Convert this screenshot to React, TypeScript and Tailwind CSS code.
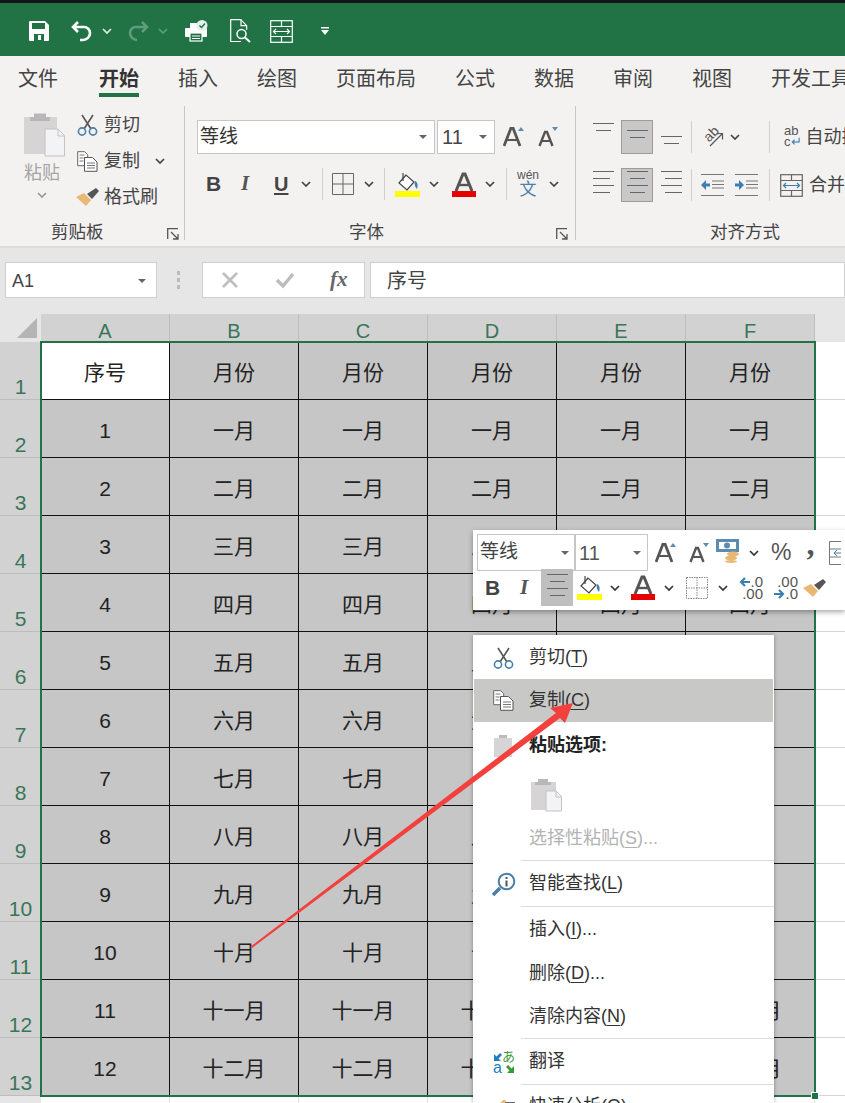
import React from "react";

const F = "font-['Liberation_Sans','Noto_Sans_CJK_SC',sans-serif]";

type S = { className?: string };
const Chev = ({ className = "ml-0" , c = "#444" }: S & { c?: string }) => (
  <svg viewBox="0 0 10 6" className={`w-[10px] h-[6px] shrink-0 ${className}`}><path d="M1 1l4 4 4-4" fill="none" stroke={c} strokeWidth="1.7" /></svg>
);
const Tri = ({ className = "" }: S) => (
  <svg viewBox="0 0 8 4" className={`w-[8px] h-[4px] shrink-0 ${className}`}><path d="M0 0h8L4 4z" fill="#666" /></svg>
);
const Launcher = ({ className = "" }: S) => (
  <svg viewBox="0 0 12 12" className={`w-[12px] h-[12px] shrink-0 ${className}`}><path d="M.7 11V.7H11M4 4l7 7M11 6v5H6" fill="none" stroke="#555" strokeWidth="1.3" /></svg>
);
const Scissors = ({ className = "" }: S) => (
  <svg viewBox="0 0 21 22" className={`w-[21px] h-[22px] shrink-0 ${className}`}>
    <path d="M5 1l9 14M16 1L7 15" stroke="#555" strokeWidth="1.6" fill="none" />
    <circle cx="5" cy="17.5" r="3.6" fill="none" stroke="#4a7fa8" strokeWidth="1.6" />
    <circle cx="16" cy="17.5" r="3.6" fill="none" stroke="#4a7fa8" strokeWidth="1.6" />
  </svg>
);
const CopyIc = ({ className = "" }: S) => (
  <svg viewBox="0 0 21 21" className={`w-[21px] h-[21px] shrink-0 ${className}`}>
    <path d="M.7.7h7l3 3v3H7.5v8H.7z" fill="#fff" stroke="#666" />
    <path d="M7.5 6.5h8l4.5 4.5v9.300H7.500z" fill="#fff" stroke="#555" />
    <path d="M2.500 4h5M2.500 7h4M2.500 10h4M10 12h8M10 14.500h8M10 17h8" stroke="#777" />
  </svg>
);
const Brush = ({ className = "" }: S) => (
  <svg viewBox="0 0 24 20" className={`w-[24px] h-[20px] shrink-0 ${className}`}>
    <path d="M0 10l8-4 7 7-5 6z" fill="#e8b874" />
    <path d="M11 7l9-6 3 3-7 8z" fill="#555" />
  </svg>
);
const PasteBig = ({ className = "" }: S) => (
  <svg viewBox="0 0 41 45" className={`w-[41px] h-[45px] shrink-0 ${className}`}>
    <rect x="0" y="5" width="33" height="37" fill="#d6d4d4" />
    <path d="M10 5V1.500h12V5h4v4H6V5z" fill="#b9b7b7" />
    <path d="M21 17h13l6.500 6.500V44H21z" fill="#f3f2f4" stroke="#c4c2c2" />
    <path d="M34 17v7h6.500" fill="none" stroke="#c4c2c2" />
  </svg>
);
const FillIc = ({ className = "" }: S) => (
  <svg viewBox="0 0 25 25" className={`w-[25px] h-[25px] shrink-0 ${className}`}>
    <path d="M11 3l-7 8 8 7 7-8z" fill="#fff" stroke="#444" strokeWidth="1.200" />
    <path d="M8 1v8" stroke="#444" strokeWidth="1.200" />
    <path d="M20 9c3 1 3 5 2 8-2-2-3-5-2-8z" fill="#3e7fb5" />
    <rect x="0" y="19" width="25" height="6" fill="#ffff00" />
  </svg>
);
const FontColor = ({ className = "" }: S) => (
  <svg viewBox="0 0 24 25" className={`w-[24px] h-[25px] shrink-0 ${className}`}>
    <path d="M4 19L11 2h2l7 17" fill="none" stroke="#555" strokeWidth="3" />
    <path d="M7 13h10" stroke="#555" strokeWidth="2.400" />
    <rect x="0" y="19" width="24" height="6" fill="#e60000" />
  </svg>
);
const GrowA = ({ className = "", up = true, small = false }: S & { up?: boolean; small?: boolean }) => (
  <svg viewBox="0 0 22 20" className={`w-[22px] h-[20px] shrink-0 ${className}`}>
    <path d={small ? "M2.500 19L8 5h2l5.500 14" : "M1 19L8 1h2l7 18"} fill="none" stroke="#555" strokeWidth={small ? 2.400 : 2.800} />
    <path d={small ? "M5 14h8" : "M4 13h10"} stroke="#555" strokeWidth="2" />
    <path d={up ? "M15 4l3-4 3 4z" : "M15 0h6l-3 4z"} fill="#5d8cb0" />
  </svg>
);
const Lines = ({ kind, rows = 4, className = "", w = 21 }: S & { kind: "l" | "c" | "r"; rows?: number; w?: number }) => {
  const ln = Array.from({ length: rows }, (_, i) => i);
  return (
    <svg viewBox={`0 0 ${w} ${rows * 7}`} className={`shrink-0 ${className}`} style={{ width: w, height: rows * 7 }}>
      {ln.map((i) => {
        const short = i % 2 === 1 ? (kind === "c" ? 3 : 4) : 0;
        const x1 = kind === "r" ? short : kind === "c" ? short : 0;
        const x2 = kind === "l" ? w - short : kind === "c" ? w - short : w;
        return <line key={i} x1={x1} x2={x2} y1={i * 7 + 0.5} y2={i * 7 + 0.5} stroke="#666" strokeWidth="1" />;
      })}
    </svg>
  );
};
const Indent = ({ right = false, className = "" }: S & { right?: boolean }) => (
  <svg viewBox="0 0 23 22" className={`w-[23px] h-[22px] shrink-0 ${className}`}>
    {[0.5, 7, 14, 21.5].map((y) => <line key={y} x1={y === 0.5 || y === 21.5 ? 0 : 11} x2="23" y1={y} y2={y} stroke="#777" />)}
    <line x1="11" x2="23" y1="10.500" y2="10.500" stroke="#777" />
    {right ? <path d="M0 9.500h4V6l5 5-5 5v-3.500H0z" fill="#3d7fb0" /> : <path d="M9 9.500H5V6l-5 5 5 5v-3.500h4z" fill="#3d7fb0" />}
  </svg>
);
const Merge = ({ className = "", stroke = "#666" }: S & { stroke?: string }) => (
  <svg viewBox="0 0 23 23" className={`w-[23px] h-[23px] shrink-0 ${className}`}>
    <rect x=".7" y=".7" width="21.600" height="21.600" fill="none" stroke={stroke} strokeWidth="1.200" />
    <path d="M.7 6.500h21.600M.7 16.500h21.600M11.500.7v5.800M11.500 16.500v5.800" stroke={stroke} strokeWidth="1.200" />
    <path d="M4 11.500h15M6 9l-2.500 2.500L6 14M17 9l2.500 2.500L17 14" fill="none" stroke={stroke === "#666" ? "#3d7fb0" : stroke} strokeWidth="1.200" />
  </svg>
);
const VSep = ({ className = "" }: S) => <div className={`w-px h-[32px] bg-[#d0cfce] shrink-0 ${className}`} />;
const ArrowL = () => <svg viewBox="0 0 11 10" className="w-[11px] h-[10px] shrink-0"><path d="M11 5H3M6 1L2 5l4 4" fill="none" stroke="#3d7fb0" strokeWidth="2.200" /></svg>;
const ArrowR = () => <svg viewBox="0 0 11 10" className="w-[11px] h-[10px] shrink-0"><path d="M0 5h8M5 1l4 4-4 4" fill="none" stroke="#3d7fb0" strokeWidth="2.200" /></svg>;

const tabs = ["文件", "开始", "插入", "绘图", "页面布局", "公式", "数据", "审阅", "视图", "开发工具"];
const months = ["一月", "二月", "三月", "四月", "五月", "六月", "七月", "八月", "九月", "十月", "十一月", "十二月"];

function Qat() {
  return (
    <div className="h-[53px] bg-[#217346] flex items-center pl-[29px] pt-[3px]">
      <svg viewBox="0 0 20 20" className="w-[20px] h-[20px] shrink-0"><path fillRule="evenodd" d="M1 0h15l4 4v15a1 1 0 0 1-1 1H1a1 1 0 0 1-1-1V1a1 1 0 0 1 1-1zM3 2v6h13V2zM5 13v7h10v-7z" fill="#fff" /><rect x="9" y="14" width="3" height="5" fill="#fff" /></svg>
      <svg viewBox="0 0 22 22" className="w-[22px] h-[22px] ml-[22px] shrink-0"><path d="M7 2L2 7l5 5M2 7h11a6 6 0 0 1 6 6 7 7 0 0 1-7 7H9" fill="none" stroke="#fff" strokeWidth="2.600" /></svg>
      <Chev c="#dfeee6" className="ml-[9px] w-[9px]" />
      <svg viewBox="0 0 22 22" className="w-[22px] h-[22px] ml-[15px] shrink-0"><path d="M15 2l5 5-5 5M20 7H9a6 6 0 0 0-6 6 7 7 0 0 0 7 7" fill="none" stroke="#5d9c7d" strokeWidth="2.600" /></svg>
      <Chev c="#5d9c7d" className="ml-[9px] w-[9px]" />
      <svg viewBox="0 0 23 22" className="w-[23px] h-[22px] ml-[17px] shrink-0">
        <rect x="0" y="8" width="22" height="9" rx="1" fill="#fff" />
        <rect x="5" y="3" width="9" height="6" fill="#fff" />
        <rect x="5" y="13" width="12" height="8" fill="#217346" stroke="#fff" strokeWidth="1.200" />
        <path d="M7 16h8M7 18.500h8" stroke="#fff" />
        <circle cx="17" cy="5.500" r="5.500" fill="#e5f0ea" />
        <path d="M14.500 5.500l2 2 3.500-4" fill="none" stroke="#217346" strokeWidth="1.400" />
      </svg>
      <svg viewBox="0 0 22 24" className="w-[22px] h-[24px] ml-[22px] shrink-0">
        <path d="M11 22.500H.7V.7h10l6 6v4" fill="none" stroke="#fff" strokeWidth="1.200" />
        <path d="M11 .7v6h6" fill="none" stroke="#fff" strokeWidth="1.200" />
        <circle cx="11.500" cy="15" r="4.500" fill="none" stroke="#fff" strokeWidth="1.500" />
        <path d="M15 18.500l5 4.500" stroke="#fff" strokeWidth="2" />
      </svg>
      <Merge stroke="#fff" className="ml-[18px]" />
      <svg viewBox="0 0 8 8" className="w-[8px] h-[8px] ml-[28px] shrink-0"><path d="M0 0h8v1.500H0zM0 3h8L4 8z" fill="#fff" /></svg>
    </div>
  );
}

function Tabs() {
  return (
    <div className="h-[49px] flex pl-[18px] gap-[39px] pt-[11px] text-[20px] leading-[24px] text-[#444] whitespace-nowrap overflow-hidden">
      {tabs.map((t) => (
        <div key={t} className={`shrink-0 ${t === "开始" ? "font-bold text-[#333] ml-[2px]" : ""}`}>
          {t}
          {t === "开始" && <div className="h-[4px] mt-[2px] bg-[#217346]" />}
        </div>
      ))}
    </div>
  );
}

function Clipboard() {
  return (
    <div className="w-[185px] shrink-0 border-r border-[#c8c6c4] mb-[6px] mt-[1px] flex flex-col">
      <div className="flex h-[112px] shrink-0 text-[18px] leading-[22px] text-[#444]">
        <div className="w-[77px] shrink-0 pl-[24px] pt-[6px] flex flex-col">
          <PasteBig />
          <div className="text-[18px] leading-[22px] text-[#a5a5a5] mt-[5px] whitespace-nowrap">粘贴</div>
          <Chev c="#999" className="ml-[13px] mt-[8px]" />
        </div>
        <div className="flex flex-col pt-[8px] gap-[14px]">
          <div className="flex items-center h-[22px]"><Scissors /><span className="ml-[6px]">剪切</span></div>
          <div className="flex items-center h-[22px]"><CopyIc /><span className="ml-[6px]">复制</span><Chev className="ml-[15px]" /></div>
          <div className="flex items-center h-[22px]"><Brush className="-ml-px" /><span className="ml-[4px]">格式刷</span></div>
        </div>
      </div>
      <div className="flex items-center h-[22px] shrink-0 mt-[3px] text-[17.5px] text-[#444]">
        <span className="ml-[51px]">剪贴板</span>
        <Launcher className="ml-[63px] mt-[4px]" />
      </div>
    </div>
  );
}

function FontGroup() {
  return (
    <div className="w-[391px] shrink-0 border-r border-[#c8c6c4] mb-[6px] mt-[1px] flex flex-col">
      <div className="h-[112px] shrink-0 pt-[14px] flex flex-col">
        <div className="flex items-center ml-[12px] h-[34px]">
          <div className="w-[238px] h-[34px] bg-white border border-[#c6c6c6] flex items-center justify-between pl-[2px] pr-[7px] text-[19px] text-[#333]">等线<Tri /></div>
          <div className="w-[58px] h-[34px] ml-[2px] bg-white border border-[#c6c6c6] flex items-center justify-between pl-[4px] pr-[7px] text-[20px] text-[#444]">11<Tri /></div>
          <GrowA className="ml-[8px]" />
          <GrowA className="ml-[12px]" up={false} small />
        </div>
        <div className="flex items-center ml-[21px] mt-[13px] h-[34px] text-[#444]">
          <span className="w-[14px] text-[21px] font-bold">B</span>
          <span className="ml-[21px] w-[14px] text-[21px] italic font-['Liberation_Serif',serif] font-bold text-[#555]">I</span>
          <span className="ml-[19px] w-[16px] text-[20px] font-bold underline underline-offset-2">U</span>
          <Chev className="ml-[11px]" />
          <VSep className="ml-[11px]" />
          <svg viewBox="0 0 22 22" className="w-[22px] h-[22px] ml-[9px] shrink-0"><path d="M.5.500h21v21H.5zM11 0v22M0 11h22" fill="none" stroke="#666" /></svg>
          <Chev className="ml-[10px]" />
          <VSep className="ml-[10px]" />
          <FillIc className="ml-[10px]" />
          <Chev className="ml-[9px]" />
          <FontColor className="ml-[13px]" />
          <Chev className="ml-[9px]" />
          <VSep className="ml-[11px]" />
          <div className="ml-[10px] w-[22px] flex flex-col items-center leading-none">
            <span className="text-[12px] leading-[11px] text-[#555]">wén</span>
            <span className="text-[17px] leading-[18px] text-[#4a80a8]">文</span>
          </div>
          <Chev className="ml-[10px]" />
        </div>
      </div>
      <div className="flex items-center h-[22px] shrink-0 mt-[3px] text-[17.5px] text-[#444]">
        <span className="ml-[164px]">字体</span>
        <Launcher className="ml-[172px] mt-[4px]" />
      </div>
    </div>
  );
}

function AlignGroup() {
  const active = "w-[32px] h-[34px] bg-[#c8c8c8] border border-[#9c9c9c] flex items-center justify-center shrink-0";
  return (
    <div className="flex-1 min-w-0 mt-[1px] flex flex-col overflow-hidden">
      <div className="h-[112px] shrink-0 pt-[14px] flex flex-col whitespace-nowrap">
        <div className="flex items-center ml-[17px] h-[34px]">
          <Lines kind="c" rows={2} className="mb-[12px] -mt-[2px]" />
          <div className={`${active} ml-[7px]`}><Lines kind="c" rows={2} /></div>
          <Lines kind="c" rows={2} className="ml-[8px] mt-[12px]" />
          <VSep className="ml-[9px]" />
          <svg viewBox="0 0 21 20" className="w-[21px] h-[20px] ml-[11px] shrink-0">
            <text x="1" y="12" fontSize="14" fill="#555" transform="rotate(-45 8 8)" fontFamily="Liberation Sans">ab</text>
            <path d="M7 19L19 7M13.500 6.500h6v6" fill="none" stroke="#555" strokeWidth="1.200" />
          </svg>
          <Chev className="ml-[6px]" />
          <VSep className="ml-[29px]" />
          <div className="ml-[14px] w-[20px] flex flex-col leading-none text-[#555] font-['Liberation_Sans',sans-serif]">
            <span className="text-[13px] leading-[10px]">ab</span>
            <span className="text-[13px] leading-[12px]">c<span className="text-[#3d7fb0]">↵</span></span>
          </div>
          <span className="ml-[4px] text-[18px] text-[#444]">自动换行</span>
        </div>
        <div className="flex items-center ml-[17px] mt-[14px] h-[34px]">
          <Lines kind="l" />
          <div className={`${active} ml-[7px]`}><Lines kind="c" /></div>
          <Lines kind="r" className="ml-[8px]" />
          <VSep className="ml-[9px]" />
          <Indent className="ml-[9px]" />
          <Indent right className="ml-[11px]" />
          <VSep className="ml-[11px]" />
          <Merge className="ml-[10px]" />
          <span className="ml-[6px] text-[18px] text-[#444]">合并后居中</span>
        </div>
      </div>
      <div className="h-[22px] shrink-0 mt-[3px] flex items-center text-[17.5px] text-[#444]">
        <span className="ml-[134px]">对齐方式</span>
      </div>
    </div>
  );
}

function FormulaBar() {
  return (
    <div className="h-[68px] bg-[#e6e6e6] flex items-start pt-[14px] pl-[5px] border-t-[2px] border-[#dcdcdc] box-border">
      <div className="w-[152px] h-[36px] bg-white border border-[#cfcfcf] flex items-center justify-between pl-[6px] pr-[10px] pt-[2px] text-[18px] text-[#444]">A1<Tri /></div>
      <div className="ml-[20px] mt-[9px] flex flex-col gap-[3px]">
        <div className="w-[3px] h-[4px] bg-[#bbb]" /><div className="w-[3px] h-[4px] bg-[#bbb]" /><div className="w-[3px] h-[4px] bg-[#bbb]" />
      </div>
      <div className="ml-[22px] w-[163px] h-[36px] bg-white border border-[#cfcfcf] flex items-center shrink-0">
        <svg viewBox="0 0 18 18" className="w-[18px] h-[18px] ml-[18px]"><path d="M2 2l14 14M16 2L2 16" stroke="#bdbdbd" strokeWidth="2.600" /></svg>
        <svg viewBox="0 0 20 18" className="w-[20px] h-[18px] ml-[36px]"><path d="M2 9l6 6L18 3" fill="none" stroke="#bdbdbd" strokeWidth="3.400" /></svg>
        <span className="ml-[35px] text-[21px] font-bold italic font-['Liberation_Serif',serif] text-[#666]">fx</span>
      </div>
      <div className="ml-[5px] flex-1 h-[36px] bg-white border border-[#cfcfcf] pl-[16px] pt-[2px] flex items-center text-[20px] text-[#444]">序号</div>
    </div>
  );
}

function Sheet() {
  const hdr = ["A", "B", "C", "D", "E", "F"];
  const rows: string[][] = [["序号", "月份", "月份", "月份", "月份", "月份"]];
  months.forEach((m, i) => rows.push([String(i + 1), m, m, m, m, m]));
  return (
    <div className="grid grid-cols-[41px_129px_129px_129px_129px_129px_129px_1fr] text-[21px] bg-white">
      <div className="h-[28px] bg-[#e6e6e6]">
        <svg viewBox="0 0 20 20" className="w-[20px] h-[20px] ml-[17px] mt-[4px]"><path d="M20 0v20H0z" fill="#b4b4b4" /></svg>
      </div>
      {hdr.map((h) => (
        <div key={h} className="h-[28px] bg-[#d2d2d2] border-r border-[#bdbdbd] text-[#3a7558] text-[20px] leading-[34px] text-center overflow-hidden">{h}</div>
      ))}
      <div className="h-[28px] bg-[#e6e6e6]" />
      {rows.map((r, i) => (
        <React.Fragment key={i}>
          <div className="h-[58px] bg-[#d2d2d2] border-b border-[#bdbdbd] text-[#3a7558] text-[21px] leading-[24px] flex items-end justify-center">{i + 1}</div>
          {r.map((c, j) => (
            <div key={j} className={`h-[58px] pt-[4px] flex items-center justify-center border-r border-b border-[#111] text-[#222] ${i === 0 && j === 0 ? "bg-white" : "bg-[#c6c6c6]"}`}>{c}</div>
          ))}
          <div className="h-[58px] bg-white border-b border-[#d4d4d4]" />
        </React.Fragment>
      ))}
      <div className="h-[8px] bg-[#e6e6e6]" />
      {[0, 1, 2, 3, 4, 5, 6].map((k) => <div key={k} className="h-[8px] border-r border-[#e0e0e0] last:border-r-0" />)}
    </div>
  );
}

function MiniBar() {
  return (
    <div className="absolute left-[473px] top-[530px] w-[372px] h-[80px] bg-white shadow-[0_2px_5px_rgba(0,0,0,0.35)] overflow-hidden pl-[4px] pt-[4px] whitespace-nowrap">
      <div className="flex items-center h-[37px]">
        <div className="w-[98px] h-[37px] border border-[#c6c6c6] flex items-center justify-between pl-[2px] pr-[5px] text-[19px] text-[#444]">等线<Tri /></div>
        <div className="w-[73px] h-[37px] border border-[#c6c6c6] flex items-center justify-between pl-[3px] pr-[6px] text-[20px] text-[#555]">11<Tri /></div>
        <GrowA className="ml-[7px]" />
        <GrowA className="ml-[11px]" up={false} small />
        <svg viewBox="0 0 24 24" className="w-[24px] h-[24px] ml-[6px] -mt-[4px] shrink-0">
          <rect x="0" y="0" width="23" height="13" fill="#5d8cb0" /><rect x="3" y="3" width="17" height="7" fill="#fff" /><circle cx="11" cy="6.500" r="3" fill="#5d8cb0" />
          <ellipse cx="17" cy="15" rx="6" ry="2.500" fill="#e8b874" /><ellipse cx="15" cy="19" rx="6" ry="2.500" fill="#e8b874" /><ellipse cx="15" cy="22.500" rx="6" ry="1.500" fill="#e8b874" />
        </svg>
        <Chev c="#333" className="ml-[9px]" />
        <span className="ml-[12px] text-[23px] text-[#555]">%</span>
        <span className="ml-[15px] -mt-[18px] font-['Liberation_Serif',serif] font-bold text-[32px] leading-[20px] text-[#555]">,</span>
        <svg viewBox="0 0 12 24" className="w-[12px] h-[24px] ml-[15px] shrink-0"><path d="M12 .5H.5v23H12M.5 8H12M.5 16H12" fill="none" stroke="#777" /><path d="M12 12H5m3-3l-3 3 3 3" fill="none" stroke="#3d7fb0" /></svg>
      </div>
      <div className="flex items-center h-[37px] mt-[-2px] pl-[5px] text-[#444]">
        <span className="w-[15px] text-[21px] font-bold ml-[3px]">B</span>
        <span className="ml-[20px] w-[14px] text-[21px] italic font-bold font-['Liberation_Serif',serif] text-[#555]">I</span>
        <div className="w-[32px] h-[37px] ml-[7px] bg-[#bfbfbf] flex items-center justify-center"><Lines kind="c" /></div>
        <FillIc className="ml-[4px]" />
        <Chev c="#333" className="ml-[8px]" />
        <FontColor className="ml-[11px]" />
        <Chev c="#333" className="ml-[9px]" />
        <svg viewBox="0 0 22 22" className="w-[22px] h-[22px] ml-[12px] shrink-0"><path d="M.5.500h21v21H.5zM11 0v22M0 11h22" fill="none" stroke="#888" strokeDasharray="1.500 1" /></svg>
        <Chev c="#333" className="ml-[10px]" />
        <div className="ml-[11px] w-[24px] flex flex-col items-end text-[15px] leading-[12px] text-[#555] font-['Liberation_Sans',sans-serif]">
          <span className="flex items-center"><ArrowL />.0</span><span>.00</span>
        </div>
        <div className="ml-[9px] w-[26px] flex flex-col items-end text-[15px] leading-[12px] text-[#555] font-['Liberation_Sans',sans-serif]">
          <span>.00</span><span className="flex items-center"><ArrowR />.0</span>
        </div>
        <Brush className="ml-[5px]" />
      </div>
    </div>
  );
}

function Item({ icon, children, h = "h-[43px]", cls = "" }: { icon?: React.ReactNode; children: React.ReactNode; h?: string; cls?: string }) {
  return (
    <div className={`${h} flex items-center mx-px whitespace-nowrap ${cls}`}>
      <div className="w-[55px] shrink-0 flex justify-center pl-[4px]">{icon}</div>
      {children}
    </div>
  );
}
const Sep = () => <div className="h-px ml-[48px] bg-[#dcdcdc]" />;
const U = ({ children }: { children: React.ReactNode }) => <span className="underline underline-offset-[3px] decoration-1">{children}</span>;

function Menu() {
  return (
    <div className="absolute left-[473px] top-[635px] w-[301px] h-[468px] bg-white shadow-[0_0_4px_rgba(0,0,0,0.35)] overflow-hidden text-[18px] text-[#333] pt-px">
      <Item icon={<Scissors />}>剪切(<U>T</U>)</Item>
      <Item icon={<CopyIc />} cls="bg-[#c8c8c6]">复制(<U>C</U>)</Item>
      <Item h="h-[47px]" icon={<svg viewBox="0 0 20 22" className="w-[20px] h-[22px]"><rect y="3" width="18" height="19" fill="#d6d4d4" /><path d="M5 3V0h8v3z" fill="#bbb" /></svg>}><span className="font-bold text-[#222]">粘贴选项:</span></Item>
      <div className="h-[47px] mx-px pl-[57px] flex items-center"><svg viewBox="0 0 31 34" className="w-[31px] h-[34px] shrink-0 mt-[4px]"><rect x="0" y="4" width="25" height="28" fill="#d6d4d4" /><path d="M7 4V1h10v3h3v3H4V4z" fill="#b9b7b7" /><path d="M15 13h10l5.500 5.500V33H15z" fill="#f3f2f4" stroke="#c4c2c2" /><path d="M25 13v6h5.500" fill="none" stroke="#c4c2c2" /></svg></div>
      <Item h="h-[44px]" cls="text-[#b3b3b3]">选择性粘贴(<U>S</U>)...</Item>
      <Sep />
      <Item h="h-[45px]" icon={<svg viewBox="0 0 24 24" className="w-[24px] h-[24px]"><circle cx="14.500" cy="9.500" r="7.800" fill="none" stroke="#4a7fa8" strokeWidth="2" /><path d="M8 16l-7 7" stroke="#4a7fa8" strokeWidth="3.600" /><rect x="13.500" y="8.500" width="2" height="6" fill="#555" /><rect x="13.500" y="5" width="2" height="2" fill="#555" /></svg>}>智能查找(<U>L</U>)</Item>
      <Sep />
      <Item h="h-[45px]" icon={null}>插入(<U>I</U>)...</Item>
      <Item icon={null}>删除(<U>D</U>)...</Item>
      <Item icon={null}>清除内容(<U>N</U>)</Item>
      <Sep />
      <Item h="h-[45px]" icon={
        <svg viewBox="0 0 22 24" className="w-[22px] h-[24px]">
          <path d="M1 4v7h7l-2.500-2.500L9 5 7 3 3.500 6.500z" fill="#1f7fc0" />
          <text x="9" y="11" fontSize="13" fill="#3a9a3a" fontFamily="Noto Sans CJK JP">あ</text>
          <text x="0" y="23" fontSize="16" fill="#1f7fc0" fontFamily="Liberation Sans">a</text>
          <path d="M21 23h-7l2.500-2.500L13 17l2-2 3.500 3.500L21 16z" fill="#3a9a3a" />
        </svg>}>翻译</Item>
      <Sep />
      <Item icon={<svg viewBox="0 0 22 20" className="w-[22px] h-[20px] mt-[6px]"><path d="M0 12L10 0h3L8 12z" fill="#e8b874" /><rect x="12" y="2" width="10" height="5" fill="#666" /></svg>}>快速分析(<U>Q</U>)</Item>
    </div>
  );
}

export default function App() {
  return (
    <div className={`relative w-[845px] h-[1103px] overflow-hidden bg-white ${F}`}>
      <div className="h-[3px] bg-[#15121a]" />
      <Qat />
      <div className="bg-[#f3f2f1]">
        <Tabs />
        <div className="h-[141px] flex">
          <Clipboard />
          <FontGroup />
          <AlignGroup />
        </div>
      </div>
      <FormulaBar />
      <Sheet />
      <div className="absolute left-[40px] top-[341px] w-[776px] h-[756px] border-2 border-[#217346] pointer-events-none" />
      <div className="absolute left-[812px] top-[1093px] w-[6px] h-[6px] bg-[#217346] outline outline-1 outline-white" />
      <MiniBar />
      <Menu />
      <svg viewBox="0 0 845 1103" className="absolute left-0 top-0 w-[845px] h-[1103px] pointer-events-none">
        <polygon points="250,947 556,713 550,708 573,703 565,723 560,718 252,948" fill="#f2413d" />
      </svg>
    </div>
  );
}
